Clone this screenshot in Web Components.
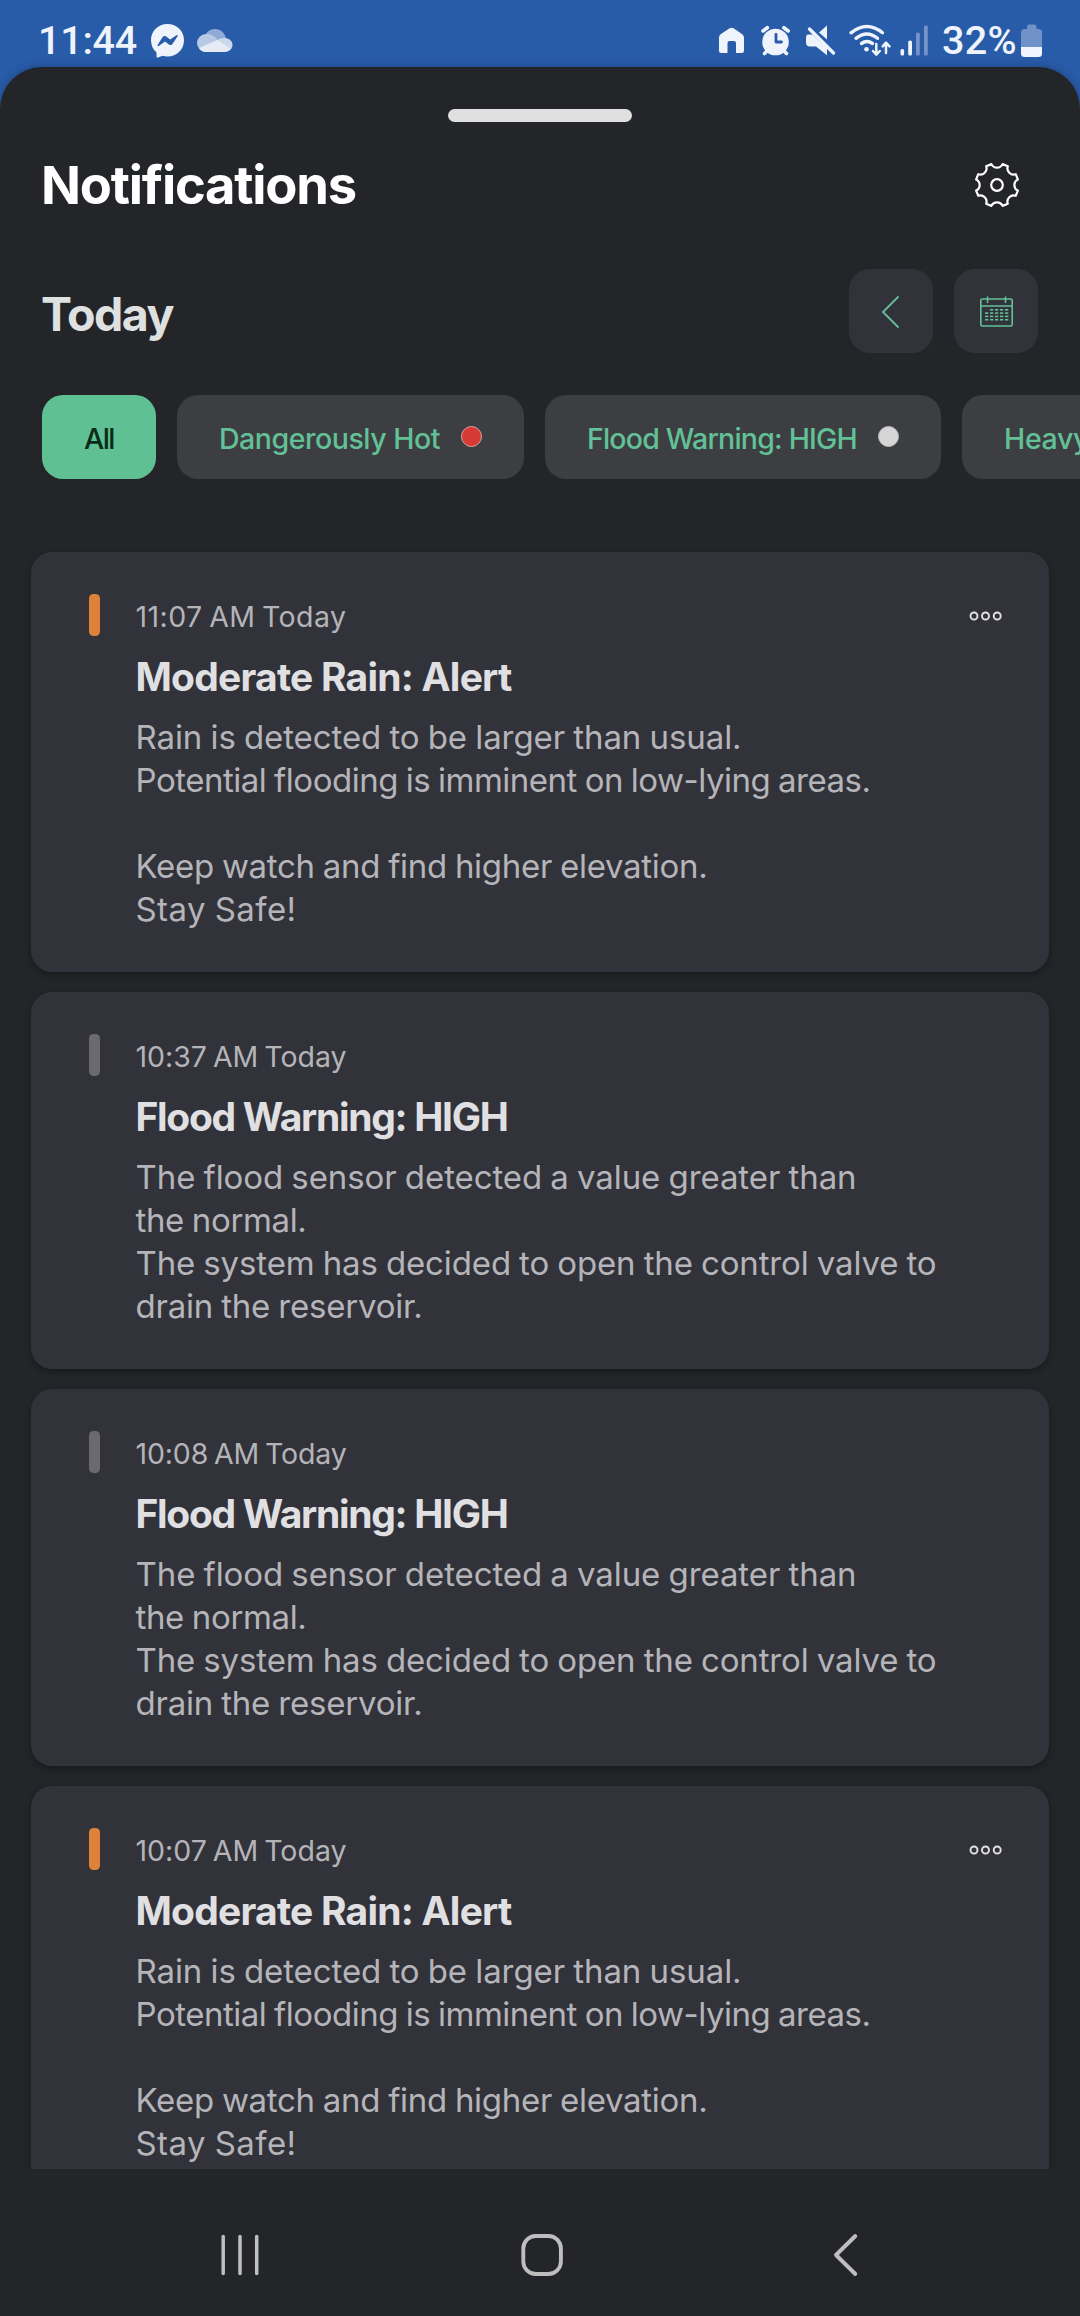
<!DOCTYPE html>
<html lang="en">
<head>
<meta charset="utf-8">
<title>Notifications</title>
<style>
html,body{margin:0;padding:0;background:#242529}
body{width:1080px;height:2316px;overflow:hidden;font-family:Inter,"Liberation Sans",sans-serif}
</style>
</head>
<body>
<notifications-app></notifications-app>
<script>
function define(name, html, setup) {
  const tpl = document.createElement('template');
  tpl.innerHTML = html;
  customElements.define(name, class extends HTMLElement {
    constructor() {
      super();
      this.attachShadow({ mode: 'open' }).appendChild(tpl.content.cloneNode(true));
    }
    connectedCallback() { if (setup) setup.call(this, this.shadowRoot); }
  });
}

/* A single line of text, tracked so that it spans the width given in "w". */
define('tracked-text', `<style>:host{display:block;white-space:nowrap}span{display:inline-block}</style><span><slot></slot></span>`,
function (root) {
  const span = root.querySelector('span');
  const w = parseFloat(this.getAttribute('w'));
  if (!w) return;
  span.style.letterSpacing = '0px';
  span.style.fontVariantLigatures = 'none';
  const n = this.textContent.length;
  const ls = (w - span.getBoundingClientRect().width) / n;
  span.style.letterSpacing = ls.toFixed(3) + 'px';
});

define('status-bar', `<style>
:host{display:flex;height:67px;box-sizing:border-box;padding:0 37px 0 38px;justify-content:space-between;font-family:Roboto,sans-serif;font-weight:500;font-size:39.5px;line-height:47px;color:#eff3fc}
.g{display:flex;align-items:flex-start;padding-top:17px}
svg{display:block;flex:none;margin-top:-17px}
</style>
<div class="g"><tracked-text w="99">11:44</tracked-text>
<svg width="103" height="67" viewBox="137 0 103 67">
<path fill="#eff3fc" d="M167.500 24c9.500 0 16.500 7 16.500 16.200s-7 16.200-16.500 16.200c-1.800 0-3.500-.3-5-.7l-4.500 1.900c-.9.3-1.400-.2-1.400-1l-.1-4.100c-3.500-3-5.500-7.300-5.500-12.300 0-9.200 7-16.200 16.500-16.200z"/>
<path fill="#285ba8" d="M157.600 44.900l4.900-7.700c.9-1.300 2.500-1.500 3.700-.7l3.900 2.900 6.400-4.200c.8-.5 1.600.2 1.100 1l-5 7.600c-.8 1.300-2.500 1.600-3.700.7l-3.800-2.900-6.400 4.300c-.8.5-1.600-.2-1.100-1z"/>
<circle cx="215" cy="40" r="11" fill="#8fabd5"/>
<path fill="#b8c9e5" d="M206 52a9 9 0 0 1 0-18c6 0 9 2.500 12 6.500L206 52z"/>
<path fill="#ccd8ec" d="M216 41c5-5 16.500-4 16.500 4 0 4-3.500 7-8 7z"/>
<path fill="#e6ebf6" d="M199 48l18.500-8 13 8.500c-1.500 2.300-4 3.500-7 3.500H206c-3 0-5.500-1.500-7-4z"/>
</svg></div>
<div class="g">
<svg width="230" height="67" viewBox="712 0 230 67" fill="#eff3fc" stroke-linecap="round" stroke-linejoin="round">
<path d="M719 37.500q0-2 1.600-3.200l9-6q2-1.200 4 0l8.700 6q1.700 1.200 1.700 3.200v13.500q0 2-2 2h-6V43q0-2-2-2h-4.500q-2 0-2 2v10h-6.500q-2 0-2-2z"/>
<g><circle cx="775.500" cy="42" r="13.300"/><g stroke="#eff3fc" stroke-width="3.600" fill="none"><path d="M763 31l4.300-3.300M788.200 31l-4.300-3.300M764.500 53.500l3-3M786.500 53.500l-3-3"/></g><path d="M776 34.500v7.500h5.500" fill="none" stroke="#285ba8" stroke-width="2.800"/></g>
<path d="M819 32.500l8-7v14zM808 34.500h4.500L827 48v7.300L816 46.500h-6q-4 0-4-4v-4q0-4 2-4z"/>
<path d="M809.500 29l24 24" stroke="#eff3fc" stroke-width="3.400"/>
<g fill="none" stroke="#eff3fc" stroke-width="3.400"><path d="M851 32.800q16-12.500 31.500 0M856 38.300q11-8.600 21.500 0M861.500 43.500q5.500-3.900 11 0"/></g>
<circle cx="866.500" cy="49.200" r="2.300"/>
<g fill="none" stroke="#eff3fc" stroke-width="2.500"><path d="M876.300 44v10M873 51l3.300 3.600 3.500-3.600M886 53V43M882.700 46.300l3.300-3.600 3.500 3.600"/></g>
<rect x="900.500" y="49" width="3.600" height="6.500" rx="1.500"/><rect x="908.200" y="40.500" width="3.800" height="15" rx="1.500"/><rect x="916" y="32.500" width="3.800" height="23" rx="1.500" fill="#7594c8"/><rect x="924" y="25.500" width="3.800" height="30" rx="1.500" fill="#7594c8"/>
</svg>
<tracked-text w="75">32%</tracked-text>
<svg width="26" height="67" viewBox="1017 0 26 67"><path fill="#7092c7" d="M1027 27q0-2.500 2-2.500h5.500q2 0 2 2.500v2h2q3.500 0 3.500 3.500V47h-21V32.500q0-3.500 3.500-3.500h2.500z"/><path fill="#f1f5fd" d="M1021 47h21v6.500q0 3.500-3.500 3.500h-14q-3.500 0-3.500-3.500z"/></svg>
</div>`);

define('gear-icon', `<style>:host{display:block;width:48px;height:48px}svg{display:block}</style>
<svg width="48" height="48" viewBox="-24 -24 48 48" fill="none" stroke="#fff" stroke-width="2.200" stroke-linejoin="round"></svg>`,
function (root) {
  /* eight short teeth joined by concave notches */
  const p = (r, a) => { const t = a * Math.PI / 180; return (r * Math.cos(t)).toFixed(2) + ' ' + (r * Math.sin(t)).toFixed(2); };
  let d = '';
  for (let k = 0; k < 8; k++) {
    const a = k * 45;
    d += (k ? 'L' : 'M') + p(21.6, a - 15) + 'A6.200 6.200 0 0 0 ' + p(21.6, a + 15);
  }
  root.querySelector('svg').innerHTML = '<path d="' + d + 'Z"/><circle r="5.800"/>';
});

define('icon-button', `<style>:host{display:flex;width:84px;height:84px;border-radius:21px;background:#32323a;align-items:center;justify-content:center}</style><slot></slot>`);

define('filter-chip', `<style>
:host{display:flex;flex:none;height:84px;box-sizing:border-box;padding:2px 42px 0;border-radius:21px;background:#3d3e42;color:#62c196;font-size:28.500px;font-weight:500;gap:21px;line-height:84px}
:host([active]){background:#5fc193;color:#0a2a1b}
i{display:none;width:21px;height:21px;margin-top:29px;border-radius:50%;box-sizing:border-box;border:1.500px solid #d9a5a3}
:host([dot]) i{display:block}
:host([dot=red]) i{background:#d63a34}
:host([dot=white]) i{background:#d6d6d6;border-color:#bbb}
</style><slot></slot><i></i>`);

define('alert-card', `<style>
:host{display:flex;flex:none;box-sizing:border-box;padding:42px 43px 41px 58px;border-radius:21px;background:#32323a;box-shadow:0 3px 6px rgba(0,0,0,.3)}
.bar{width:11px;height:42px;border-radius:4.500px;background:#6a6a70;flex:none}
:host([kind=rain]) .bar{background:#de823a}
.main{flex:1;padding-left:35.500px}
.time{margin-top:5px;font-size:28.500px;line-height:36px;color:#b4b4b8;word-spacing:-2px}
.title{margin-top:18px;font-size:39px;line-height:48px;font-weight:700;color:#e0e0e3}
.body{margin-top:15px;font-size:33px;line-height:43px;color:#b5b5b9;word-spacing:-1px}
svg{display:none;flex:none;margin-top:13px}
:host([kind=rain]) svg{display:block}
</style>
<div class="bar"></div>
<div class="main"><div class="time"><slot name="time"></slot></div><div class="title"><slot name="title"></slot></div><div class="body"><slot></slot></div></div>
<svg width="40" height="18" viewBox="966 607 40 18" fill="none" stroke="#e2e2e4" stroke-width="1.900"><circle cx="974" cy="616" r="3.500"/><circle cx="985.500" cy="616" r="3.500"/><circle cx="997.200" cy="616" r="3.500"/></svg>`);

define('text-gap', `<style>:host{display:block;height:43px}</style>`);

define('nav-bar', `<style>:host{display:flex;height:147px;box-sizing:border-box;padding:62px 0 0 219px}svg{display:block;flex:none}.home{margin:0 264px 0 257px}</style>
<svg width="42" height="48" viewBox="219 2231 42 48" fill="none" stroke="#bebebe" stroke-width="3.500" stroke-linecap="round"><path d="M223.200 2236.500v37M240 2236.500v37M256.700 2236.500v37"/></svg>
<svg class="home" width="48" height="48" viewBox="518 2231 48 48" fill="none" stroke="#bebebe" stroke-width="3.900"><rect x="523.300" y="2236" width="37.600" height="38" rx="12.500"/></svg>
<svg width="32" height="48" viewBox="830 2231 32 48" fill="none" stroke="#bebebe" stroke-width="3.900" stroke-linecap="round" stroke-linejoin="round"><path d="M855.300 2236L836 2255l19.300 19"/></svg>`);

const rain = (time, tw) => `<alert-card kind="rain"><tracked-text slot="time" w="${tw}">${time} AM Today</tracked-text><tracked-text slot="title" w="376">Moderate Rain: Alert</tracked-text><tracked-text w="606">Rain is detected to be larger than usual.</tracked-text><tracked-text w="735">Potential flooding is imminent on low-lying areas.</tracked-text><text-gap></text-gap><tracked-text w="572">Keep watch and find higher elevation.</tracked-text><tracked-text w="161">Stay Safe!</tracked-text></alert-card>`;
const flood = (time, tw) => `<alert-card><tracked-text slot="time" w="${tw}">${time} AM Today</tracked-text><tracked-text slot="title" w="372">Flood Warning: HIGH</tracked-text><tracked-text w="721">The flood sensor detected a value greater than</tracked-text><tracked-text w="171">the normal.</tracked-text><tracked-text w="801">The system has decided to open the control valve to</tracked-text><tracked-text w="287">drain the reservoir.</tracked-text></alert-card>`;

let cal = '';
for (let r = 0; r < 4; r++) for (let c = 0; c < 5; c++) if (r || c) cal += `<rect x="${6 + c * 5}" y="${15 + r * 3.300}" width="3.300" height="1.600" fill="#62c196" stroke="none"/>`;

define('notifications-app', `<style>
:host{display:block;width:1080px;height:2316px;overflow:hidden;background:#285ba8}
.sheet{display:flex;flex-direction:column;height:2249px;border-radius:42px 42px 0 0;background:#242529;box-shadow:0 0 8px rgba(0,0,0,.25);overflow:hidden}
.handle{flex:none;width:184px;height:13px;border-radius:7px;background:#dfe0df;margin:42px auto 0}
header,.day{display:flex;flex:none;justify-content:space-between;align-items:center}
header{height:60px;margin-top:33px;padding:0 59.500px 0 41px;font-size:52.500px;font-weight:700;color:#fff}
.day{height:84px;margin-top:54px;padding:0 42px 0 41px;font-size:46.500px;font-weight:700;color:#dfe0e0}
.day tracked-text{padding-top:6px}
.btns{display:flex;gap:21px}
.chips{display:flex;flex:none;gap:21px;margin-top:42px;padding-left:42px}
.list{display:flex;flex-direction:column;gap:20px;flex:none;height:1670px;padding:53px 31px 0;margin-top:20px;box-sizing:border-box;overflow:hidden}
nav-bar{flex:none}
svg{display:block}
</style>
<status-bar></status-bar>
<div class="sheet">
<div class="handle"></div>
<header><tracked-text w="315">Notifications</tracked-text><gear-icon></gear-icon></header>
<div class="day"><tracked-text w="132">Today</tracked-text><div class="btns">
<icon-button><svg width="42" height="42" viewBox="870 290 42 42" fill="none" stroke="#62c196" stroke-width="1.800"><path d="M898.500 296.500L883 312l15.500 15.500"/></svg></icon-button>
<icon-button><svg width="34" height="34" viewBox="0 0 34 34" fill="none" stroke="#62c196" stroke-width="1.600"><rect x="1.800" y="5" width="31.400" height="27" rx="1.500"/><path d="M1.800 12h31.400M8.500 2.500v6.500M26.500 2.500v6.500"/>${cal}</svg></icon-button>
</div></div>
<div class="chips"><filter-chip active><tracked-text w="30">All</tracked-text></filter-chip><filter-chip dot="red"><tracked-text w="221">Dangerously Hot</tracked-text></filter-chip><filter-chip dot="white"><tracked-text w="270">Flood Warning: HIGH</tracked-text></filter-chip><filter-chip><tracked-text w="150">Heavy Rain</tracked-text></filter-chip></div>
<div class="list">${rain('11:07', 211)}${flood('10:37', 211)}${flood('10:08', 211)}${rain('10:07', 211)}</div>
<nav-bar></nav-bar>
</div>`);
</script>
</body>
</html>
